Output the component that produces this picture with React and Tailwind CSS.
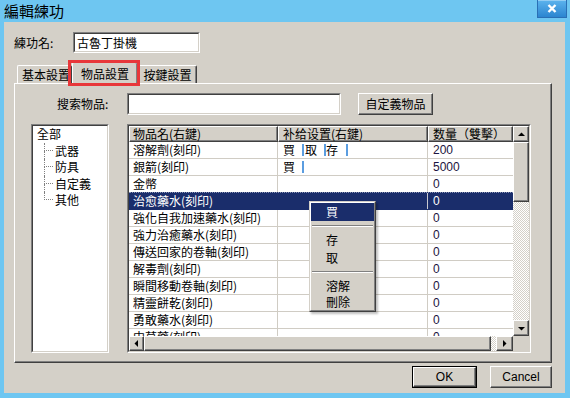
import React from "react";

const cjk = "font-['Noto_Sans_CJK_TC','Noto_Sans_CJK_SC',sans-serif]";
const latin = "font-['Liberation_Sans',Arial,sans-serif]";

const raised =
    "border border-t-white border-l-white border-r-[#404040] border-b-[#404040] shadow-[inset_-1px_-1px_0_#808080]";
const checker =
    "bg-[repeating-conic-gradient(#d4d0c8_0%_25%,#ffffff_0%_50%)] bg-[length:2px_2px]";

const rows = [
    { name: "溶解劑", tag: true, supply: "all", qty: "200" },
    { name: "銀箭", tag: true, supply: "buy", qty: "5000" },
    { name: "金幣", qty: "0" },
    { name: "治愈藥水", tag: true, qty: "0", selected: true },
    { name: "強化自我加速藥水", tag: true, qty: "0" },
    { name: "強力治癒藥水", tag: true, qty: "0" },
    { name: "傳送回家的卷軸", tag: true, qty: "0" },
    { name: "解毒劑", tag: true, qty: "0" },
    { name: "瞬間移動卷軸", tag: true, qty: "0" },
    { name: "精靈餅乾", tag: true, qty: "0" },
    { name: "勇敢藥水", tag: true, qty: "0" },
    { name: "中草藥", tag: true, qty: "0" },
];

const treeChildren = ["武器", "防具", "自定義", "其他"];

function Sunken({ className = "", children }) {
    return (
        <div className={`border border-t-[#808080] border-l-[#808080] border-b-white border-r-white ${className}`}>
            <div className="w-full h-full border border-t-[#404040] border-l-[#404040] border-b-[#d4d0c8] border-r-[#d4d0c8] bg-white overflow-hidden">
                {children}
            </div>
        </div>
    );
}

function Arrow({ dir }) {
    const pts = {
        up: "0,5 3.5,1.5 7,5",
        down: "0,2 3.5,5.5 7,2",
        left: "5,0 1.5,3.5 5,7",
        right: "2,0 5.5,3.5 2,7",
    }[dir];
    return (
        <svg width="7" height="7" viewBox="0 0 7 7">
            <polygon points={pts} fill="#000" />
        </svg>
    );
}

function ArrowBtn({ dir, className = "" }) {
    return (
        <div className={`shrink-0 bg-[#d4d0c8] flex items-center justify-center ${raised} ${className}`}>
            <Arrow dir={dir} />
        </div>
    );
}

function Bar({ className = "" }) {
    return <span className={`inline-block w-[2px] h-[12px] bg-[#5b9de0] align-middle ${className}`} />;
}

function Supply({ kind }) {
    if (kind === "all") {
        return (
            <div className="flex items-center">
                <span>買</span>
                <Bar className="ml-[7px]" />
                <span className="ml-[1px]">取</span>
                <Bar className="ml-[7px]" />
                <span>存</span>
                <Bar className="ml-[8px]" />
            </div>
        );
    }
    if (kind === "buy") {
        return (
            <div className="flex items-center">
                <span>買</span>
                <Bar className="ml-[7px]" />
            </div>
        );
    }
    return null;
}

function Tree() {
    return (
        <Sunken className="w-[78px] h-[229px]">
            <div className="pt-[0px] text-[12px] leading-[16px] text-black">
                <div className="h-[16.5px] pl-[4px] flex items-center">全部</div>
                {treeChildren.map((c, i) => (
                    <div key={c} className="h-[16.5px] flex pl-[11px]">
                        <div className="w-[9px] flex flex-col">
                            <div className="h-1/2 border-l border-b border-dotted border-[#808080]" />
                            <div
                                className={`h-1/2 border-dotted border-[#808080] ${
                                    i < treeChildren.length - 1 ? "border-l" : ""
                                }`}
                            />
                        </div>
                        <div className="ml-[2px] flex items-center">{c}</div>
                    </div>
                ))}
            </div>
        </Sunken>
    );
}

function ContextMenu() {
    return (
        <div className="absolute left-[182px] top-[77px] w-[67px] border border-t-[#d4d0c8] border-l-[#d4d0c8] border-r-[#404040] border-b-[#404040] shadow-[2px_2px_2px_rgba(0,0,0,0.25)] z-10">
            <div className="border border-t-white border-l-white border-r-[#808080] border-b-[#808080] bg-[#d4d0c8] text-[12px] leading-[16px] text-black">
                <div className="h-[18px] bg-[#1a2d6b] text-white pl-[15px] flex items-center">買</div>
                <div className="h-[10px] flex flex-col justify-center px-[1px]">
                    <div className="border-t border-t-[#808080] border-b border-b-white" />
                </div>
                <div className="h-[18px] pl-[15px] flex items-center">存</div>
                <div className="h-[18px] pl-[15px] flex items-center">取</div>
                <div className="h-[10px] flex flex-col justify-center px-[1px]">
                    <div className="border-t border-t-[#808080] border-b border-b-white" />
                </div>
                <div className="h-[17px] pl-[15px] flex items-center">溶解</div>
                <div className="h-[16px] pl-[15px] flex items-center">刪除</div>
            </div>
        </div>
    );
}

function ItemTable() {
    return (
        <div className="relative">
            <Sunken className="w-[404px] h-[229px]">
                <div className="flex h-full">
                    <div className="flex flex-col w-[384px]">
                        <div className="flex h-[16px] shrink-0 bg-[#d4d0c8] text-[12px] leading-[14px] text-black">
                            <div className={`w-[149px] pl-[3px] flex items-center ${raised}`}>物品名(右鍵)</div>
                            <div className={`w-[150px] pl-[4px] flex items-center ${raised}`}>补给设置(右鍵)</div>
                            <div className={`w-[85px] pl-[4px] flex items-center ${raised}`}>数量（雙擊）</div>
                        </div>
                        <div className="flex-1 overflow-hidden text-[12px] leading-[16px]">
                            {rows.map((r) => (
                                <div
                                    key={r.name}
                                    className={`flex h-[17px] border-b ${
                                        r.selected
                                            ? "bg-[#1a2d6b] text-white border-[#1a2d6b] border-t border-t-[#8a94b4] border-dotted -mt-[1px] h-[18px]"
                                            : "text-black border-[#d0ccc4]"
                                    }`}
                                >
                                    <div className={`w-[149px] pl-[4px] flex items-center border-r ${r.selected ? "border-[#1a2d6b]" : "border-[#d0ccc4]"}`}>
                                        {r.name}
                                        {r.tag ? "(刻印)" : ""}
                                    </div>
                                    <div className={`w-[150px] pl-[5px] flex items-center border-r ${r.selected ? "border-[#c8c8d0]" : "border-[#d0ccc4]"}`}>
                                        <Supply kind={r.supply} />
                                    </div>
                                    <div className={`w-[85px] pl-[5px] flex items-center ${latin} ${r.selected ? "text-white" : "text-[#1c1440]"}`}>
                                        {r.qty}
                                    </div>
                                </div>
                            ))}
                        </div>
                        <div className="flex h-[15px] shrink-0">
                            <ArrowBtn dir="left" className="w-[15px] h-[15px]" />
                            <div className={`w-[347px] h-[15px] bg-[#d4d0c8] ${raised}`} />
                            <div className={`flex-1 ${checker}`} />
                            <ArrowBtn dir="right" className="w-[17px] h-[15px]" />
                        </div>
                    </div>
                    <div className="flex flex-col w-[16px]">
                        <ArrowBtn dir="up" className="w-[16px] h-[16px]" />
                        <div className={`w-[16px] h-[60px] shrink-0 bg-[#d4d0c8] ${raised}`} />
                        <div className={`flex-1 ${checker}`} />
                        <ArrowBtn dir="down" className="w-[16px] h-[16px]" />
                        <div className="h-[15px] shrink-0 bg-[#d4d0c8]" />
                    </div>
                </div>
            </Sunken>
            <ContextMenu />
        </div>
    );
}

export default function App() {
    return (
        <div className={`w-[570px] h-[398px] bg-[#6ec6f1] flex flex-col overflow-hidden ${cjk}`}>
            <div className="h-[22px] shrink-0 flex items-start justify-between pl-[4px] pr-[3px]">
                <div className="text-[15px] leading-[22px] text-black">編輯練功</div>
                <div className="w-[30px] h-[18px] bg-gradient-to-b from-[#5cb4ee] to-[#2b85d0] border border-[#2a6fb5] border-t-0 shadow-[inset_0_1px_0_rgba(255,255,255,0.35)] flex items-center justify-center">
                    <svg width="10" height="9" viewBox="0 0 10 9">
                        <path d="M1.5 1 L8.5 8 M8.5 1 L1.5 8" stroke="#fff" strokeWidth="2.4" />
                    </svg>
                </div>
            </div>

            <div className="flex-1 ml-[4px] mr-[5px] mb-[5px] bg-[#d4d0c8] flex flex-col pl-[10px]">
                <div className="flex items-center mt-[10px] h-[21px] text-[12px] text-black">
                    <div className="w-[59px]">練功名:</div>
                    <Sunken className="w-[127px] h-[21px]">
                        <div className="pl-[2px] leading-[17px] text-[12px]">古魯丁掛機</div>
                    </Sunken>
                </div>

                <div className="relative mt-[7px] h-[23px] flex items-end pl-[3px] text-[12px] text-black">
                    <div className="w-[55px] h-[18px] pl-[4px] flex items-center border border-b-0 border-t-white border-l-white border-r-[#404040] rounded-t-[2px] shadow-[inset_-1px_0_0_#808080]">
                        基本設置
                    </div>
                    <div className="relative z-10 w-[66px] h-[22px] -mb-[1px] bg-[#d4d0c8] flex items-center justify-center border border-b-0 border-t-white border-l-white border-r-[#404040] rounded-t-[2px] shadow-[inset_-1px_0_0_#808080]">
                        物品設置
                    </div>
                    <div className="w-[59px] h-[18px] flex items-center justify-center border border-b-0 border-t-white border-l-white border-r-[#404040] rounded-t-[2px] shadow-[inset_-1px_0_0_#808080]">
                        按鍵設置
                    </div>
                    <div className="absolute left-[54px] top-0 w-[72px] h-[26px] border-[3px] border-[#e8373a] z-20" />
                </div>

                <div className="w-[538px] h-[280px] border border-t-white border-l-white border-r-[#404040] border-b-[#404040] shadow-[inset_-1px_-1px_0_#808080] flex flex-col">
                    <div className="flex items-center mt-[8px] h-[23px] pl-[42px] text-[12px] text-black">
                        <div className="w-[70px]">搜索物品:</div>
                        <Sunken className="w-[214px] h-[22px]" />
                        <div className={`ml-[17px] w-[75px] h-[22px] bg-[#d4d0c8] flex items-center justify-center ${raised}`}>
                            自定義物品
                        </div>
                    </div>
                    <div className="flex mt-[9px] pl-[16px] gap-[18px]">
                        <Tree />
                        <ItemTable />
                    </div>
                </div>

                <div className={`flex justify-end gap-[13px] mt-[3px] pr-[13px] text-[12px] text-black ${latin}`}>
                    <div className="w-[65px] h-[22px] border border-black">
                        <div className={`w-full h-full flex items-center justify-center ${raised}`}>OK</div>
                    </div>
                    <div className={`w-[62px] h-[22px] flex items-center justify-center ${raised}`}>Cancel</div>
                </div>
            </div>
        </div>
    );
}
